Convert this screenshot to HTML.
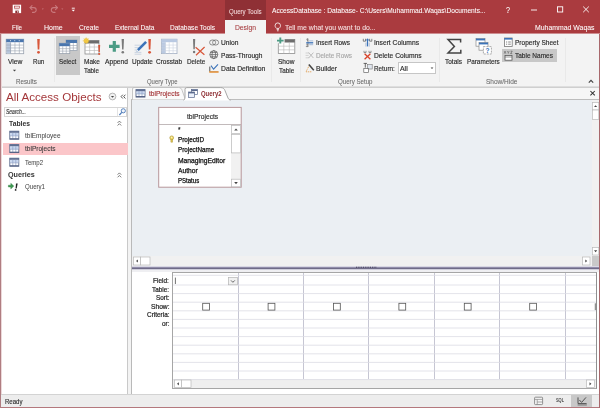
<!DOCTYPE html>
<html><head><meta charset="utf-8"><title>Access</title>
<style>
*{box-sizing:border-box;margin:0;padding:0}
html,body{width:600px;height:408px;overflow:hidden;background:#fff}
body{font-family:"Liberation Sans",sans-serif;font-size:7.5px;color:#333;position:relative}
.a{position:absolute}
.t{position:absolute;white-space:nowrap;display:block;transform-origin:0 50%}
svg{position:absolute;overflow:visible}
#title{left:0;top:0;width:600px;height:33px;background:#aa3b3f}
#title2{left:0;top:33px;width:600px;height:1px;background:#cd8d90}
#qt{left:225px;top:0;width:41px;height:20px;background:#8f3035}
#design{left:225px;top:20px;width:41px;height:15px;background:#f3f3f3}
#ribbon{left:0;top:34px;width:600px;height:52px;background:#f3f3f3}
#ribline{left:0;top:86px;width:600px;height:2px;background:linear-gradient(#dedede 0,#dedede 50%,#cfcfcf 50%,#cfcfcf 100%)}
.sep{position:absolute;top:38px;width:1px;height:44px;background:#e9e9e9}
.hl{position:absolute;background:#c8c8c8}
#work{left:0;top:88px;width:600px;height:306px;background:#f3f3f3}
#nav{left:2px;top:88px;width:126px;height:306px;background:#fff;border-right:1px solid #c9c9c9}
#navhead{left:2px;top:88px;width:126px;height:17px;background:#fff}
#search{left:4px;top:107px;width:123px;height:10px;background:#fff;border:1px solid #d6d6d6}
#selrow{left:3px;top:143px;width:125px;height:12.4px;background:#fbc6c9}
#tabstrip{left:131px;top:88px;width:469px;height:12px;background:#f6f6f6}
#tabline{left:131px;top:99px;width:469px;height:1px;background:#bdbdbd}
#upper{left:132px;top:100px;width:460px;height:156px;background:#ebeff3}
#docborder{left:131px;top:100px;width:1px;height:294px;background:#b9b9b9}
#vscroll{left:592px;top:100px;width:7px;height:156px;background:#f1f1f1}
#hscroll{left:132px;top:256px;width:460px;height:10px;background:#f1f1f1}
#corner{left:592px;top:256px;width:7px;height:10px;background:#c9c9c9}
#split{left:132px;top:266px;width:467px;height:4px;background:linear-gradient(#d9d8e4 0,#d9d8e4 25%,#918daa 25%,#918daa 50%,#6f6b88 50%,#6f6b88 75%,#cfcedb 75%,#cfcedb 100%)}
#lower{left:132px;top:270px;width:467px;height:124px;background:#fff;border-top:2px solid #efeff2}
#grid{left:172px;top:272px;width:425px;height:117px;background:#fff;border:1px solid #a6a6a6;border-right-color:#8f8f8f}
#gscroll{left:173px;top:379px;width:423px;height:9px;background:#efefef}
.btn{position:absolute;background:#fff;border:1px solid #b5b5b5}
#status{left:0;top:394px;width:600px;height:13px;background:#ededed;border-top:1px solid #d3d3d3}
#botline{left:0;top:407px;width:600px;height:1px;background:#b4787d}
#leftline{left:0;top:34px;width:1px;height:374px;background:#b07d81}
#leftline2{left:1px;top:34px;width:1px;height:360px;background:#ecd8d9}
#rightline{left:599px;top:34px;width:1px;height:374px;background:#a8686c}
#tbox{left:158.6px;top:107.3px;width:82.6px;height:80px;background:#fff;outline:0}
#tboxline{left:159px;top:124px;width:82px;height:1px;background:#c2babb}
#tscroll{left:231px;top:125px;width:10px;height:62px;background:#f1f1f1}
.cb{position:absolute;width:7px;height:7px;border:1px solid #555;background:#fff;top:302px}

#texts{position:absolute;left:0;top:0;width:600px;height:408px;will-change:transform}

</style></head><body>
<div id="title" class="a"></div><div id="title2" class="a"></div>
<div id="qt" class="a"></div><div id="design" class="a"></div>
<div id="ribbon" class="a"></div><div id="ribline" class="a"></div>
<div class="hl" style="left:56px;top:36px;width:24px;height:39px"></div>
<div class="hl" style="left:502px;top:49px;width:55px;height:13px"></div>
<div class="sep" style="left:54px"></div><div class="sep" style="left:271px"></div><div class="sep" style="left:300px"></div>
<div class="sep" style="left:439px"></div><div class="sep" style="left:565px"></div>
<div class="a" style="left:398px;top:62px;width:38px;height:12px;background:#fff;border:1px solid #c6c6c6"></div>
<div id="work" class="a"></div>
<div id="nav" class="a"></div>
<div id="search" class="a"></div>
<div id="selrow" class="a"></div>
<div id="tabstrip" class="a"></div><div id="tabline" class="a"></div>
<div id="upper" class="a"></div><div id="docborder" class="a"></div>
<div id="vscroll" class="a"></div><div id="hscroll" class="a"></div><div id="corner" class="a"></div>
<div id="split" class="a"></div>
<div id="lower" class="a"></div>
<div id="grid" class="a"></div>
<div id="gscroll" class="a"></div>
<div id="tbox" class="a"></div><div id="tboxline" class="a"></div><div id="tscroll" class="a"></div>
<div id="status" class="a"></div>
<div class="hl" style="left:571px;top:395px;width:21px;height:12px"></div>
<div id="botline" class="a"></div><div id="leftline" class="a"></div><div id="leftline2" class="a"></div><div id="rightline" class="a"></div>
<svg width="600" height="408" viewBox="0 0 600 408" style="left:0;top:0">
<rect x="12.7" y="4.7" width="8.4" height="8.4" fill="#fff"/><rect x="14.5" y="6.1" width="4.9" height="2.1" fill="#fbeeee" stroke="#b0444a" stroke-width="0.7"/><rect x="14.4" y="9.4" width="5" height="0.6" fill="#e9c5c7"/><rect x="15.3" y="10.6" width="3.5" height="2.5" fill="#8b2d31"/><rect x="17.2" y="11.2" width="1" height="1.3" fill="#fff"/>
<g fill="none" stroke="#c9797d" stroke-width="1.1" stroke-linecap="round" stroke-linejoin="round"><path d="M30.2 7.6h3.6a2.4 2.4 0 0 1 0 4.8h-1.3"/><path d="M32 5.6l-2 2 2 2"/><path d="M57.3 7.6h-3.6a2.4 2.4 0 0 0 0 4.8h1.3"/><path d="M55.5 5.6l2 2-2 2"/></g>
<path d="M41.8 8.6h2l-1 1.1z" fill="#c9797d"/><path d="M61.3 8.6h2l-1 1.1z" fill="#c9797d"/>
<path d="M71.8 8.2h3" stroke="#fff" stroke-width="0.9"/><path d="M71.6 9.7h3.4l-1.7 1.9z" fill="#fff"/>
<g fill="none" stroke="#fff" stroke-width="0.8"><path d="M276.6 28.4c-1.2-1-1.5-2-1.5-2.8a2.7 2.7 0 0 1 5.4 0c0 .8-.3 1.8-1.5 2.8z"/><path d="M276.7 29.6h2.2M277 30.8h1.6"/></g>
<path d="M531 10h6" stroke="#fff" stroke-width="0.9"/><rect x="557.5" y="6.8" width="5.2" height="5.2" fill="none" stroke="#fff" stroke-width="0.9"/><path d="M583.2 6.6l5.6 5.6M588.8 6.6l-5.6 5.6" stroke="#fff" stroke-width="0.9"/>
<rect x="6.2" y="39.2" width="17.5" height="14.5" fill="#fff" stroke="#9aa3b0" stroke-width="0.8"/>
<rect x="6.2" y="39.2" width="17.5" height="3" fill="#4a76ae"/>
<rect x="6.6000000000000005" y="42.2" width="4.38" height="11.1" fill="#b9c9df"/>
<path d="M10.57 42.2V53.7M14.95 42.2V53.7M19.32 42.2V53.7M6.2 45.08H23.7M6.2 47.95H23.7M6.2 50.83H23.7" stroke="#9aa3b0" stroke-width="0.6" fill="none"/>
<path d="M10.5 40.7h0M14.8 40.7h0M19.2 40.7h0" stroke="#fff" stroke-width="1" stroke-linecap="round"/>
<path d="M12.9 69.8h3.2l-1.6 1.8z" fill="#444"/>
<path d="M37.2 39h2.6l-.5 10.6h-1.6z" fill="#d8573a"/><circle cx="38.5" cy="52.3" r="1.4" fill="#d8573a"/>
<rect x="66" y="40" width="11" height="10.5" fill="#fff" stroke="#9aa3b0" stroke-width="0.8"/>
<rect x="66" y="40" width="11" height="3" fill="#4a76ae"/>
<path d="M69.67 43V50.5M73.33 43V50.5M66 45.50H77M66 48.00H77" stroke="#9aa3b0" stroke-width="0.6" fill="none"/>
<rect x="59.2" y="43.2" width="10.6" height="10.4" fill="#fff" stroke="#9aa3b0" stroke-width="0.8"/>
<rect x="59.2" y="43.2" width="10.6" height="3" fill="#4a76ae"/>
<path d="M62.73 46.2V53.6M66.27 46.2V53.6M59.2 48.67H69.8M59.2 51.13H69.8" stroke="#9aa3b0" stroke-width="0.6" fill="none"/>
<rect x="85" y="40.5" width="14" height="13.5" fill="#fff" stroke="#8d8d8d" stroke-width="0.8"/>
<rect x="85" y="40.5" width="14" height="3" fill="#6d6d6d"/>
<path d="M89.67 43.5V54.0M94.33 43.5V54.0M85 47.00H99M85 50.50H99" stroke="#b5b5b5" stroke-width="0.6" fill="none"/>
<circle cx="86.2" cy="40.8" r="2.3" fill="#f7d24a" stroke="#e8b93a" stroke-width="0.6"/><path d="M86.2 37.2v7.2M82.6 40.8h7.2M83.7 38.3l5 5M88.7 38.3l-5 5" stroke="#f0c23c" stroke-width="0.5"/>
<path d="M98.2 45h2l-.4 7h-1.2z" fill="#d8573a"/><circle cx="99.2" cy="54" r="1.1" fill="#d8573a"/>
<path d="M109 46.4h10.6M114.3 41.1v10.6" stroke="#4c9c85" stroke-width="3.2"/>
<path d="M121.6 39h2.4l-.5 10.6h-1.4z" fill="#7a7a7a"/><circle cx="122.8" cy="52.3" r="1.3" fill="#7a7a7a"/>
<path d="M134.6 45.2h6M134.6 47.6h4.5M134.6 50h3M134.6 52.4h6.8M134.6 54.2h6.8" stroke="#b9c6d8" stroke-width="0.7"/>
<path d="M145.2 41l1.8 1.8-8 8-2.6.9.8-2.7z" fill="#3b73b9"/><path d="M136.3 51.6l.7-2.4 1.7 1.7z" fill="#f3f3f3"/>
<path d="M148.3 39h2.6l-.5 10.6h-1.6z" fill="#d8573a"/><circle cx="149.6" cy="52.3" r="1.4" fill="#d8573a"/>
<rect x="161.4" y="39.2" width="15.6" height="14.4" fill="#fff" stroke="#a3afc4" stroke-width="0.8"/>
<rect x="161.4" y="39.2" width="15.6" height="3" fill="#b9c9e2"/>
<rect x="161.8" y="42.2" width="3.90" height="11.0" fill="#b9c9e2"/>
<path d="M165.30 42.2V53.6M169.20 42.2V53.6M173.10 42.2V53.6M161.4 45.05H177.0M161.4 47.90H177.0M161.4 50.75H177.0" stroke="#c9d1df" stroke-width="0.6" fill="none"/>
<path d="M193 39h2.2l-.4 10.2h-1.4z" fill="#7a7a7a"/><circle cx="194.1" cy="52" r="1.2" fill="#7a7a7a"/>
<path d="M195.6 47.2l8.8 7.6M204.6 47l-8.6 8.2" stroke="#d8573a" stroke-width="1.2" fill="none"/>
<rect x="209.6" y="40" width="6" height="5" rx="2.5" fill="none" stroke="#666" stroke-width="0.7"/><rect x="212.6" y="40" width="6" height="5" rx="2.5" fill="none" stroke="#666" stroke-width="0.7"/>
<g fill="none" stroke="#555" stroke-width="0.7"><circle cx="213.8" cy="54.6" r="4"/><ellipse cx="213.8" cy="54.6" rx="1.8" ry="4"/><path d="M209.8 54.6h8M210.5 52.4h6.6M210.5 56.8h6.6"/></g>
<path d="M209.8 66.6v5.2h8.4" fill="none" stroke="#444" stroke-width="0.9"/><path d="M211 65.6l2.6 3.6 4.4-4.8" fill="none" stroke="#3b73b9" stroke-width="1.1"/><rect x="209.2" y="71.2" width="9.4" height="1.6" fill="#f0a04a"/>
<rect x="278.3" y="39.5" width="16.5" height="14" fill="#fff" stroke="#8d8d8d" stroke-width="0.8"/>
<rect x="278.3" y="39.5" width="16.5" height="3" fill="#6d6d6d"/>
<path d="M283.80 42.5V53.5M289.30 42.5V53.5M278.3 46.17H294.8M278.3 49.83H294.8" stroke="#b5b5b5" stroke-width="0.6" fill="none"/>
<rect x="277" y="37.6" width="7.6" height="5.6" fill="#f3f3f3"/><path d="M277 40.6h6.6M280.3 37.6v6" stroke="#4c9c85" stroke-width="1.9"/>
<path d="M308 38.6v8.4" stroke="#555" stroke-width="0.6"/><path d="M306.2 42.8h7" stroke="#3b73b9" stroke-width="1.3"/><path d="M309.2 40.9h4M309.2 44.7h4" stroke="#8fa9cf" stroke-width="0.8"/><path d="M306.4 39.4l1-.8v2.6M306.2 44.4c1-.9 2-.2 1.2.8l-1.2 1.4h1.8" stroke="#555" stroke-width="0.6" fill="none"/>
<path d="M305.6 53h3.6M305.6 55.4h3M305.6 57.8h3.6" stroke="#c8c8c8" stroke-width="0.8"/><path d="M308.6 52.6l4.8 5.4M313.4 52.6l-4.8 5.4" stroke="#bdbdbd" stroke-width="1"/>
<path d="M306.2 71.4l3.2-6.2 1 .6" fill="none" stroke="#e1a256" stroke-width="0.9" stroke-dasharray="1.2 0.7"/><path d="M306 71.8h6" stroke="#e1a256" stroke-width="0.9" stroke-dasharray="1.2 0.7"/><path d="M308.8 64.4l5 5.8" stroke="#444" stroke-width="1.5"/>
<path d="M363.3 38.8v2.4h2.2v-2.4M369.6 38.8v2.4h2.2v-2.4" fill="none" stroke="#555" stroke-width="0.7"/><path d="M367.5 38.8v7.6" stroke="#3b73b9" stroke-width="1.2"/><path d="M365.8 40.8l1.7-2 1.7 2" stroke="#3b73b9" fill="none" stroke-width="0.8"/><path d="M365.9 42.6v4M369.2 42.6v4" stroke="#8fa9cf" stroke-width="0.7"/>
<path d="M364 50.8v1.8h2v-1.8M369 50.8v1.8h2v-1.8" fill="none" stroke="#666" stroke-width="0.7"/><path d="M364.6 53.8l5.8 5.4M370.4 53.8l-5.8 5.4" stroke="#d8432a" stroke-width="1.3"/>
<path d="M363.6 63.4h3.4M365.3 63.4v4.2" stroke="#444" stroke-width="0.8"/><rect x="367.6" y="64.6" width="4.6" height="4.4" fill="#dfe5ee" stroke="#777" stroke-width="0.6"/><rect x="363.8" y="68.6" width="4.6" height="3.8" fill="#fff" stroke="#666" stroke-width="0.7"/>
<path d="M430.6 67.4h2.8l-1.4 1.7z" fill="#444"/>
<path d="M460.6 42.6v-3.2h-12.6l6.4 7-6.4 6.6h12.8v-3.2" fill="none" stroke="#444" stroke-width="1.5" stroke-linejoin="miter"/>
<rect x="476" y="38.6" width="9" height="7.6" fill="#fff" stroke="#8a8a8a" stroke-width="0.7"/><rect x="476" y="38.6" width="9" height="1.8" fill="#3b73b9"/>
<rect x="479" y="42.6" width="9" height="7.6" fill="#fff" stroke="#8a8a8a" stroke-width="0.7"/><rect x="479" y="42.6" width="9" height="1.8" fill="#3b73b9"/>
<rect x="483.4" y="46.6" width="8" height="7.4" fill="#fff" stroke="#8a8a8a" stroke-width="0.7" stroke-dasharray="2 1"/>
<text x="485.6" y="53" font-size="6.5" font-family="Liberation Sans, sans-serif" fill="#3b73b9" font-weight="bold">?</text>
<rect x="504.4" y="38" width="7.8" height="8.4" fill="#fff" stroke="#777" stroke-width="0.8"/><rect x="504.4" y="38" width="7.8" height="1.6" fill="#3b73b9"/><path d="M506 42h1.2M508.2 42h2.6M506 44.2h1.2M508.2 44.2h2.6" stroke="#666" stroke-width="0.8"/>
<rect x="505" y="55.4" width="7" height="4.8" fill="#fff" stroke="#555" stroke-width="0.8"/><path d="M505 57h7" stroke="#555" stroke-width="0.6"/><path d="M504.2 51.2l1.6 2.4M505.8 51.2l-1.6 2.4M507.4 51.2l.9 1.2.9-1.2M508.3 52.4v1.2M510.6 51.2h1.6l-1.6 2.4h1.6" stroke="#444" stroke-width="0.55" fill="none"/>
<path d="M588.8 82.6l2.2-2.2 2.2 2.2" fill="none" stroke="#444" stroke-width="1.2"/>
<circle cx="112.5" cy="96.5" r="3.4" fill="#f1f1f1" stroke="#9c9c9c" stroke-width="0.7"/><path d="M110.9 96h3.2l-1.6 1.8z" fill="#444"/>
<path d="M122.8 94.7l-1.7 1.9 1.7 1.9M125.4 94.7l-1.7 1.9 1.7 1.9" fill="none" stroke="#444" stroke-width="0.9"/>
<path d="M117.5 108v8.5" stroke="#dcdcdc" stroke-width="0.8"/><circle cx="123.3" cy="110.8" r="2.1" fill="#eef3fa" stroke="#4a78b8" stroke-width="0.9"/><path d="M121.8 112.4l-2.4 2.6" stroke="#4a78b8" stroke-width="1.2"/>
<path d="M117.6 122.9l1.8-1.8 1.8 1.8M117.6 125.5l1.8-1.8 1.8 1.8" fill="none" stroke="#444" stroke-width="0.7"/>
<path d="M117.6 174.70000000000002l1.8-1.8 1.8 1.8M117.6 177.3l1.8-1.8 1.8 1.8" fill="none" stroke="#444" stroke-width="0.7"/>
<rect x="9.8" y="131.2" width="9" height="8" fill="#fdfeff" stroke="#5c6b8d" stroke-width="0.9"/>
<rect x="10.200000000000001" y="132.79999999999998" width="8.2" height="2.88" fill="#c9d8f0"/>
<rect x="9.700000000000001" y="131.1" width="9.2" height="1.7" fill="#5f6e92"/>
<path d="M12.80 132.79999999999998V139.2M15.80 132.79999999999998V139.2M9.8 135.84H18.8" stroke="#8fa0c4" stroke-width="0.7" fill="none"/>
<rect x="9.8" y="138.29999999999998" width="9" height="1.1" fill="#4f5d7f"/>
<rect x="9.8" y="144.6" width="9" height="8" fill="#fdfeff" stroke="#5c6b8d" stroke-width="0.9"/>
<rect x="10.200000000000001" y="146.2" width="8.2" height="2.88" fill="#c9d8f0"/>
<rect x="9.700000000000001" y="144.5" width="9.2" height="1.7" fill="#5f6e92"/>
<path d="M12.80 146.2V152.6M15.80 146.2V152.6M9.8 149.24H18.8" stroke="#8fa0c4" stroke-width="0.7" fill="none"/>
<rect x="9.8" y="151.7" width="9" height="1.1" fill="#4f5d7f"/>
<rect x="9.8" y="158.2" width="9" height="8" fill="#fdfeff" stroke="#5c6b8d" stroke-width="0.9"/>
<rect x="10.200000000000001" y="159.79999999999998" width="8.2" height="2.88" fill="#c9d8f0"/>
<rect x="9.700000000000001" y="158.1" width="9.2" height="1.7" fill="#5f6e92"/>
<path d="M12.80 159.79999999999998V166.2M15.80 159.79999999999998V166.2M9.8 162.84H18.8" stroke="#8fa0c4" stroke-width="0.7" fill="none"/>
<rect x="9.8" y="165.29999999999998" width="9" height="1.1" fill="#4f5d7f"/>
<path d="M8.4 185.2h2.4v-1.9l3 2.8-3 2.8v-1.9H8.4z" fill="#3f9a52" stroke="#2c7a3c" stroke-width="0.4"/><path d="M16 183.4h1.7l-1 5h-1.1z" fill="#222"/><circle cx="15.6" cy="189.9" r="0.85" fill="#222"/>
<path d="M132.5 99.5V89a1.5 1.5 0 0 1 1.5-1.5h44.5c2.2 0 3 1.2 3.6 2.8l2.2 6.2c.5 1.6 1 2.6 2.2 3" fill="#fafafa" stroke="#b9b9b9" stroke-width="0.8"/>
<path d="M183.6 100.4c1-.6 1.4-1.6 1.4-3.4v-7.6a1.8 1.8 0 0 1 1.8-1.8h34c2.4 0 3.4 1.2 4.2 3l2.6 6.4c.7 1.8 1.4 2.8 3 3.4z" fill="#fff"/><path d="M183.6 100.2c1-.6 1.4-1.6 1.4-3.2v-7.6a1.8 1.8 0 0 1 1.8-1.8h34c2.4 0 3.4 1.2 4.2 3l2.6 6.4c.7 1.8 1.4 2.8 3 3.2" fill="none" stroke="#9d9d9d" stroke-width="0.9"/>
<rect x="136" y="89.6" width="9" height="7.4" fill="#fdfeff" stroke="#5c6b8d" stroke-width="0.9"/>
<rect x="136.4" y="91.19999999999999" width="8.2" height="2.66" fill="#c9d8f0"/>
<rect x="135.9" y="89.5" width="9.2" height="1.7" fill="#5f6e92"/>
<path d="M139.00 91.19999999999999V97.0M142.00 91.19999999999999V97.0M136 93.89H145" stroke="#8fa0c4" stroke-width="0.7" fill="none"/>
<rect x="136" y="96.1" width="9" height="1.1" fill="#4f5d7f"/>
<rect x="191.4" y="89.6" width="6" height="5" fill="#fff" stroke="#5b6b8e" stroke-width="0.7"/><rect x="191.4" y="89.6" width="6" height="1.4" fill="#5b6b8e"/><rect x="188.6" y="92" width="6" height="5.4" fill="#eaf0fa" stroke="#5b6b8e" stroke-width="0.7"/><rect x="188.6" y="92" width="6" height="1.4" fill="#5b6b8e"/>
<path d="M590.4 91l4.4 4.4M594.8 91l-4.4 4.4" stroke="#333" stroke-width="1.05"/>
<rect x="158.7" y="107.4" width="82.5" height="79.8" fill="none" stroke="#b8979b" stroke-width="1"/>
<rect x="231.5" y="125.5" width="9" height="8" fill="#fff" stroke="#b9b9b9" stroke-width="0.7"/><path d="M234.2 130.6h3.6l-1.8-2.2z" fill="#444"/>
<rect x="231.5" y="134.5" width="9" height="18.4" fill="#fff" stroke="#b9b9b9" stroke-width="0.7"/>
<rect x="231.5" y="179.2" width="9" height="7.6" fill="#fff" stroke="#b9b9b9" stroke-width="0.7"/><path d="M234.2 182h3.6l-1.8 2.2z" fill="#444"/>
<path d="M170.9 139.2h1.6v3h-1.6z" fill="#e6cc55" stroke="#a8902e" stroke-width="0.5"/><circle cx="171.7" cy="137.8" r="1.9" fill="#f1dc6a" stroke="#a8902e" stroke-width="0.6"/><circle cx="171.7" cy="137.2" r="0.55" fill="#fff"/>
<rect x="592.4" y="102.4" width="6.4" height="7.6" fill="#fff" stroke="#b9b9b9" stroke-width="0.7"/>
<path d="M594.0 107.10000000000001h3.2l-1.6-1.9z" fill="#444"/>
<rect x="592.4" y="110" width="6.4" height="9.6" fill="#fff" stroke="#b9b9b9" stroke-width="0.7"/>
<rect x="592.4" y="247.4" width="6.4" height="7.6" fill="#fff" stroke="#b9b9b9" stroke-width="0.7"/>
<path d="M594.0 250.3h3.2l-1.6 1.9z" fill="#444"/>
<rect x="133.4" y="257" width="7.2" height="8" fill="#fff" stroke="#b9b9b9" stroke-width="0.7"/>
<path d="M137.9 259.4v3.2l-1.9-1.6z" fill="#444"/>
<rect x="140.6" y="257" width="9.4" height="8" fill="#fff" stroke="#b9b9b9" stroke-width="0.7"/>
<rect x="582.4" y="257" width="7.6" height="8" fill="#fff" stroke="#b9b9b9" stroke-width="0.7"/>
<path d="M585.3 259.4v3.2l1.9-1.6z" fill="#444"/>
<path d="M356 267.3h21" stroke="#3f3b55" stroke-width="1.1" stroke-dasharray="1.2 1.1"/>
<path d="M238.5 273V379M303.5 273V379M368.5 273V379M434.5 273V379M499.5 273V379M565.5 273V379" stroke="#c6c6d3" stroke-width="1" fill="none"/>
<path d="M173 275.3H596M173 285.00H596M173 293.60H596M173 302.20H596M173 310.80H596M173 319.40H596M173 328.00H596M173 336.60H596M173 345.20H596M173 353.80H596M173 362.40H596M173 371.00H596M173 379.60H596" stroke="#dcdce4" stroke-width="0.8" fill="none"/>
<path d="M175.4 277.6v6.4" stroke="#333" stroke-width="0.7"/><rect x="228.4" y="277.4" width="9" height="7.4" fill="#f1f1f1" stroke="#b5b5b5" stroke-width="0.7"/><path d="M231 280.4l1.9 1.9 1.9-1.9" fill="none" stroke="#444" stroke-width="0.8"/>
<rect x="202.7" y="303.3" width="6.8" height="6.8" fill="#fff" stroke="#555" stroke-width="0.8"/>
<rect x="268.1" y="303.3" width="6.8" height="6.8" fill="#fff" stroke="#555" stroke-width="0.8"/>
<rect x="333.5" y="303.3" width="6.8" height="6.8" fill="#fff" stroke="#555" stroke-width="0.8"/>
<rect x="398.9" y="303.3" width="6.8" height="6.8" fill="#fff" stroke="#555" stroke-width="0.8"/>
<rect x="464.3" y="303.3" width="6.8" height="6.8" fill="#fff" stroke="#555" stroke-width="0.8"/>
<rect x="529.7" y="303.3" width="6.8" height="6.8" fill="#fff" stroke="#555" stroke-width="0.8"/>
<path d="M595.3 303.3v6.8" stroke="#555" stroke-width="0.8"/>
<rect x="174.4" y="380" width="7.2" height="7.6" fill="#fff" stroke="#b9b9b9" stroke-width="0.7"/>
<path d="M178.9 382.2v3.2l-1.9-1.6z" fill="#444"/>
<rect x="181.6" y="380" width="9.4" height="7.6" fill="#fff" stroke="#b9b9b9" stroke-width="0.7"/>
<rect x="586.4" y="380" width="8" height="7.6" fill="#fff" stroke="#b9b9b9" stroke-width="0.7"/>
<path d="M589.5 382.2v3.2l1.9-1.6z" fill="#444"/>
<rect x="534.6" y="397.2" width="8" height="7.4" rx="0.8" fill="#f6f6f6" stroke="#777" stroke-width="0.8"/><path d="M534.6 399.4h8M537.2 399.4v5.2M537.2 402h5.4" stroke="#888" stroke-width="0.7"/>
<path d="M578 397.4v6.2h8.6" fill="none" stroke="#444" stroke-width="0.9"/><path d="M579.4 400l2.2 2.4 4.4-5" fill="none" stroke="#444" stroke-width="0.9"/><rect x="577.6" y="404.2" width="9.2" height="1.4" fill="#888"/>
</svg>

<div id="texts">
<span class="t" style="left:229.2px;top:5.80px;font-size:6.75px;color:#f3d9da;line-height:12px;transform:scaleX(0.9079);-webkit-text-stroke:0.06px #f3d9da;">Query Tools</span>
<span class="t" style="left:272px;top:5.30px;font-size:6.84px;color:#ffffff;line-height:12px;transform:scaleX(0.9711);-webkit-text-stroke:0.06px #ffffff;">AccessDatabase : Database- C:\Users\Muhammad.Waqas\Documents...</span>
<span class="t" style="left:505.6px;top:3.80px;font-size:8.4px;color:#ffffff;line-height:12px;transform:scaleX(0.8562);-webkit-text-stroke:0.06px #ffffff;">?</span>
<span class="t" style="left:12px;top:21.75px;font-size:7.02px;color:#ffffff;line-height:12px;transform:scaleX(0.8840);-webkit-text-stroke:0.06px #ffffff;">File</span>
<span class="t" style="left:43.8px;top:21.75px;font-size:7.02px;color:#ffffff;line-height:12px;transform:scaleX(0.9990);-webkit-text-stroke:0.06px #ffffff;">Home</span>
<span class="t" style="left:79px;top:21.75px;font-size:7.02px;color:#ffffff;line-height:12px;transform:scaleX(0.9496);-webkit-text-stroke:0.06px #ffffff;">Create</span>
<span class="t" style="left:114.5px;top:21.75px;font-size:7.02px;color:#ffffff;line-height:12px;transform:scaleX(0.9244);-webkit-text-stroke:0.06px #ffffff;">External Data</span>
<span class="t" style="left:170px;top:21.75px;font-size:7.02px;color:#ffffff;line-height:12px;transform:scaleX(0.9329);-webkit-text-stroke:0.06px #ffffff;">Database Tools</span>
<span class="t" style="left:235px;top:21.75px;font-size:7.02px;color:#a4373a;line-height:12px;transform:scaleX(0.9614);-webkit-text-stroke:0.06px #a4373a;">Design</span>
<span class="t" style="left:284.5px;top:21.75px;font-size:7.02px;color:#f6e4e4;line-height:12px;transform:scaleX(0.9792);-webkit-text-stroke:0.06px #f6e4e4;">Tell me what you want to do...</span>
<span class="t" style="left:535px;top:21.75px;font-size:7.02px;color:#ffffff;line-height:12px;transform:scaleX(0.9822);-webkit-text-stroke:0.06px #ffffff;">Muhammad Waqas</span>
<span class="t" style="left:7.5px;top:56.00px;font-size:6.84px;color:#2b2b2b;line-height:12px;transform:scaleX(0.9872);-webkit-text-stroke:0.15px #2b2b2b;">View</span>
<span class="t" style="left:32.8px;top:56.00px;font-size:6.84px;color:#2b2b2b;line-height:12px;transform:scaleX(0.8938);-webkit-text-stroke:0.15px #2b2b2b;">Run</span>
<span class="t" style="left:58.8px;top:56.00px;font-size:6.84px;color:#2b2b2b;line-height:12px;transform:scaleX(0.9060);-webkit-text-stroke:0.15px #2b2b2b;">Select</span>
<span class="t" style="left:83.5px;top:56.00px;font-size:6.84px;color:#2b2b2b;line-height:12px;transform:scaleX(0.9519);-webkit-text-stroke:0.15px #2b2b2b;">Make</span>
<span class="t" style="left:84.4px;top:64.80px;font-size:6.84px;color:#2b2b2b;line-height:12px;transform:scaleX(0.9187);-webkit-text-stroke:0.15px #2b2b2b;">Table</span>
<span class="t" style="left:105px;top:56.00px;font-size:6.84px;color:#2b2b2b;line-height:12px;transform:scaleX(0.9768);-webkit-text-stroke:0.15px #2b2b2b;">Append</span>
<span class="t" style="left:132px;top:56.00px;font-size:6.84px;color:#2b2b2b;line-height:12px;transform:scaleX(0.9441);-webkit-text-stroke:0.15px #2b2b2b;">Update</span>
<span class="t" style="left:156px;top:56.00px;font-size:6.84px;color:#2b2b2b;line-height:12px;transform:scaleX(0.9514);-webkit-text-stroke:0.15px #2b2b2b;">Crosstab</span>
<span class="t" style="left:186.5px;top:56.00px;font-size:6.84px;color:#2b2b2b;line-height:12px;transform:scaleX(0.9266);-webkit-text-stroke:0.15px #2b2b2b;">Delete</span>
<span class="t" style="left:278px;top:56.00px;font-size:6.84px;color:#2b2b2b;line-height:12px;transform:scaleX(0.9594);-webkit-text-stroke:0.15px #2b2b2b;">Show</span>
<span class="t" style="left:278.8px;top:64.80px;font-size:6.84px;color:#2b2b2b;line-height:12px;transform:scaleX(0.9309);-webkit-text-stroke:0.15px #2b2b2b;">Table</span>
<span class="t" style="left:445px;top:56.00px;font-size:6.84px;color:#2b2b2b;line-height:12px;transform:scaleX(0.9527);-webkit-text-stroke:0.15px #2b2b2b;">Totals</span>
<span class="t" style="left:467px;top:56.00px;font-size:6.84px;color:#2b2b2b;line-height:12px;transform:scaleX(0.9293);-webkit-text-stroke:0.15px #2b2b2b;">Parameters</span>
<span class="t" style="left:220.6px;top:36.50px;font-size:6.84px;color:#2b2b2b;line-height:12px;transform:scaleX(0.9751);-webkit-text-stroke:0.15px #2b2b2b;">Union</span>
<span class="t" style="left:220.6px;top:49.50px;font-size:6.84px;color:#2b2b2b;line-height:12px;transform:scaleX(0.9652);-webkit-text-stroke:0.15px #2b2b2b;">Pass-Through</span>
<span class="t" style="left:220.6px;top:62.60px;font-size:6.84px;color:#2b2b2b;line-height:12px;transform:scaleX(0.9911);-webkit-text-stroke:0.15px #2b2b2b;">Data Definition</span>
<span class="t" style="left:316px;top:36.50px;font-size:6.84px;color:#2b2b2b;line-height:12px;transform:scaleX(0.9428);-webkit-text-stroke:0.15px #2b2b2b;">Insert Rows</span>
<span class="t" style="left:316px;top:49.50px;font-size:6.84px;color:#a8a8a8;line-height:12px;transform:scaleX(0.9298);-webkit-text-stroke:0.15px #a8a8a8;">Delete Rows</span>
<span class="t" style="left:316px;top:62.60px;font-size:6.84px;color:#2b2b2b;line-height:12px;transform:scaleX(0.9875);-webkit-text-stroke:0.15px #2b2b2b;">Builder</span>
<span class="t" style="left:374px;top:36.50px;font-size:6.84px;color:#2b2b2b;line-height:12px;transform:scaleX(0.9799);-webkit-text-stroke:0.15px #2b2b2b;">Insert Columns</span>
<span class="t" style="left:374px;top:49.50px;font-size:6.84px;color:#2b2b2b;line-height:12px;transform:scaleX(0.9778);-webkit-text-stroke:0.15px #2b2b2b;">Delete Columns</span>
<span class="t" style="left:374px;top:62.60px;font-size:6.84px;color:#2b2b2b;line-height:12px;transform:scaleX(0.9283);-webkit-text-stroke:0.15px #2b2b2b;">Return:</span>
<span class="t" style="left:400.3px;top:62.60px;font-size:6.84px;color:#2b2b2b;line-height:12px;transform:scaleX(1.0140);-webkit-text-stroke:0.15px #2b2b2b;">All</span>
<span class="t" style="left:515px;top:36.50px;font-size:6.84px;color:#2b2b2b;line-height:12px;transform:scaleX(0.9551);-webkit-text-stroke:0.15px #2b2b2b;">Property Sheet</span>
<span class="t" style="left:515px;top:49.50px;font-size:6.84px;color:#2b2b2b;line-height:12px;transform:scaleX(0.9534);-webkit-text-stroke:0.15px #2b2b2b;">Table Names</span>
<span class="t" style="left:16.2px;top:75.80px;font-size:6.57px;color:#666;line-height:12px;transform:scaleX(0.9502);-webkit-text-stroke:0.05px #666;">Results</span>
<span class="t" style="left:147px;top:75.80px;font-size:6.57px;color:#666;line-height:12px;transform:scaleX(0.9020);-webkit-text-stroke:0.05px #666;">Query Type</span>
<span class="t" style="left:338px;top:75.80px;font-size:6.57px;color:#666;line-height:12px;transform:scaleX(0.9364);-webkit-text-stroke:0.05px #666;">Query Setup</span>
<span class="t" style="left:486px;top:75.80px;font-size:6.57px;color:#666;line-height:12px;transform:scaleX(0.9921);-webkit-text-stroke:0.05px #666;">Show/Hide</span>
<span class="t" style="left:6px;top:91.00px;font-size:11.8px;color:#a4373a;line-height:12px;transform:scaleX(0.9842);">All Access Objects</span>
<span class="t" style="left:5.5px;top:106.00px;font-size:6.4px;color:#333;line-height:12px;font-style:italic;transform:scaleX(0.7819);-webkit-text-stroke:0.15px #333;">Search...</span>
<span class="t" style="left:9px;top:117.60px;font-size:7.4px;color:#333;line-height:12px;font-weight:bold;transform:scaleX(0.9180);">Tables</span>
<span class="t" style="left:25px;top:129.50px;font-size:6.66px;color:#4a4a4a;line-height:12px;transform:scaleX(0.9689);-webkit-text-stroke:0.05px #4a4a4a;">tblEmployee</span>
<span class="t" style="left:25px;top:143.40px;font-size:6.66px;color:#3a3a3a;line-height:12px;transform:scaleX(0.9814);-webkit-text-stroke:0.08px #3a3a3a;">tblProjects</span>
<span class="t" style="left:25px;top:156.70px;font-size:6.66px;color:#4a4a4a;line-height:12px;transform:scaleX(0.9007);-webkit-text-stroke:0.05px #4a4a4a;">Temp2</span>
<span class="t" style="left:8.3px;top:169.00px;font-size:7.4px;color:#333;line-height:12px;font-weight:bold;transform:scaleX(0.9698);">Queries</span>
<span class="t" style="left:25px;top:181.20px;font-size:6.66px;color:#4a4a4a;line-height:12px;transform:scaleX(0.9162);-webkit-text-stroke:0.05px #4a4a4a;">Query1</span>
<span class="t" style="left:149px;top:87.50px;font-size:6.66px;color:#a4373a;line-height:12px;transform:scaleX(0.9814);-webkit-text-stroke:0.15px #a4373a;">tblProjects</span>
<span class="t" style="left:201px;top:87.50px;font-size:7.4px;color:#8c2a2e;line-height:12px;font-weight:bold;transform:scaleX(0.8044);">Query2</span>
<span class="t" style="left:186.6px;top:111.30px;font-size:7.02px;color:#2a2a2a;line-height:12px;transform:scaleX(0.9522);-webkit-text-stroke:0.15px #2a2a2a;">tblProjects</span>
<span class="t" style="left:178px;top:123.50px;font-size:6.84px;color:#222;line-height:12px;transform:scaleX(0.9357);-webkit-text-stroke:0.15px #222;">*</span>
<span class="t" style="left:177.8px;top:133.90px;font-size:6.75px;color:#111;line-height:12px;transform:scaleX(0.9436);-webkit-text-stroke:0.25px #111;">ProjectID</span>
<span class="t" style="left:177.8px;top:144.30px;font-size:6.75px;color:#111;line-height:12px;transform:scaleX(0.9278);-webkit-text-stroke:0.25px #111;">ProjectName</span>
<span class="t" style="left:177.8px;top:154.70px;font-size:6.75px;color:#111;line-height:12px;transform:scaleX(0.9983);-webkit-text-stroke:0.25px #111;">ManagingEditor</span>
<span class="t" style="left:177.8px;top:164.60px;font-size:6.75px;color:#111;line-height:12px;transform:scaleX(0.9904);-webkit-text-stroke:0.25px #111;">Author</span>
<span class="t" style="left:177.8px;top:174.60px;font-size:6.75px;color:#111;line-height:12px;transform:scaleX(0.8968);-webkit-text-stroke:0.25px #111;">PStatus</span>
<span class="t" style="left:153.2px;top:274.60px;font-size:6.57px;color:#222;line-height:12px;transform:scaleX(0.9899);-webkit-text-stroke:0.2px #222;">Field:</span>
<span class="t" style="left:152px;top:283.70px;font-size:6.57px;color:#222;line-height:12px;transform:scaleX(0.9763);-webkit-text-stroke:0.2px #222;">Table:</span>
<span class="t" style="left:155.6px;top:291.80px;font-size:6.57px;color:#222;line-height:12px;transform:scaleX(0.9741);-webkit-text-stroke:0.2px #222;">Sort:</span>
<span class="t" style="left:150.6px;top:300.50px;font-size:6.57px;color:#222;line-height:12px;transform:scaleX(1.0137);-webkit-text-stroke:0.2px #222;">Show:</span>
<span class="t" style="left:146.6px;top:309.00px;font-size:6.57px;color:#222;line-height:12px;transform:scaleX(0.9789);-webkit-text-stroke:0.2px #222;">Criteria:</span>
<span class="t" style="left:161.6px;top:318.00px;font-size:6.57px;color:#222;line-height:12px;transform:scaleX(0.9776);-webkit-text-stroke:0.2px #222;">or:</span>
<span class="t" style="left:5px;top:396.00px;font-size:6.57px;color:#333;line-height:12px;transform:scaleX(0.9218);-webkit-text-stroke:0.15px #333;">Ready</span>
<span class="t" style="left:556.4px;top:395.20px;font-size:4.8px;color:#444;line-height:12px;transform:scaleX(0.8117);-webkit-text-stroke:0.15px #444;">SQL</span>
</div>
</body></html>
